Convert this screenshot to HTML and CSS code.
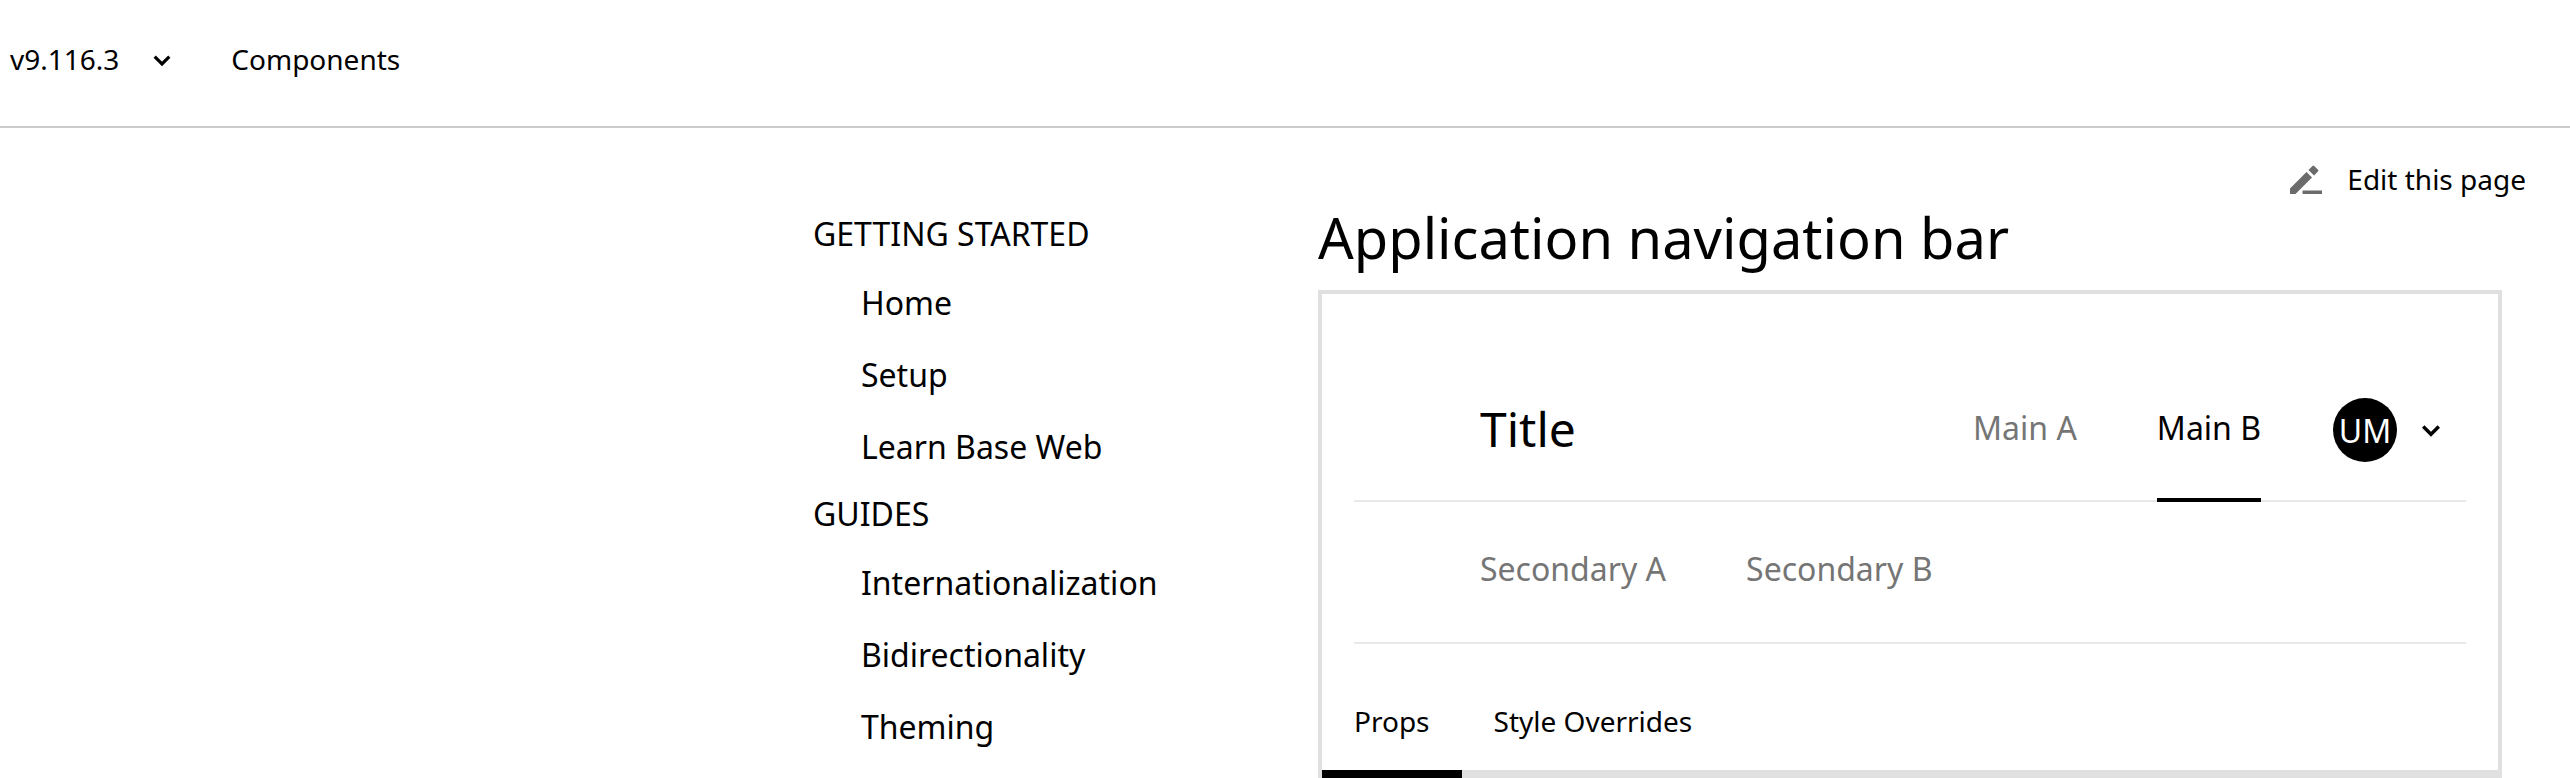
FILE: index.html
```html
<!DOCTYPE html>
<html lang="en">
<head>
<meta charset="utf-8">
<title>Application navigation bar</title>
<link rel="stylesheet" href="styles.css">
</head>
<body>
<header class="topbar">
  <span class="version">v9.116.3</span>
  <svg class="chev chev-top" viewBox="0 0 24 24"><path d="M6.5 9.5 12 15 17.5 9.5" /></svg>
  <span class="top-link">Components</span>
</header>
<div class="page">
  <nav class="sidebar">
    <div class="group">GETTING STARTED</div>
    <a class="item">Home</a>
    <a class="item">Setup</a>
    <a class="item">Learn Base Web</a>
    <div class="group">GUIDES</div>
    <a class="item">Internationalization</a>
    <a class="item">Bidirectionality</a>
    <a class="item">Theming</a>
  </nav>
  <main class="content">
    <div class="edit-row">
      <svg class="pencil" viewBox="0 0 32 30"><path d="M0 29V23.5L16.5 7 22 12.5 5.5 29Z M18.5 5 22.5 1a1.2 1.2 0 0 1 1.7 0l3.8 3.8a1.2 1.2 0 0 1 0 1.7L24 10.5Z M12.5 25.5H32V29H12.5Z" /></svg>
      <span class="edit-text">Edit this page</span>
    </div>
    <h1 class="title">Application navigation bar</h1>
    <section class="card">
      <div class="appnav">
        <div class="appnav-main">
          <span class="app-title">Title</span>
          <div class="main-links">
            <span class="main-link">Main A</span>
            <span class="main-link active">Main B</span>
          </div>
          <span class="avatar">UM</span>
          <svg class="chev chev-user" viewBox="0 0 24 24"><path d="M6.5 9.5 12 15 17.5 9.5" /></svg>
        </div>
        <div class="appnav-sub">
          <span class="sub-link">Secondary A</span>
          <span class="sub-link">Secondary B</span>
        </div>
      </div>
      <div class="tabs">
        <span class="tab">Props</span>
        <span class="tab">Style Overrides</span>
      </div>
      <div class="tab-track"><div class="tab-thumb"></div></div>
    </section>
  </main>
</div>
</body>
</html>
```
FILE: styles.css
```css
html, body { margin: 0; padding: 0; height: 778px; overflow: hidden; background: #fff; }
body { font-family: "Noto Sans", sans-serif; color: #000; }
.topbar { height: 118px; padding-bottom: 8px; border-bottom: 2px solid #cbcbcb; display: flex; align-items: center; padding-left: 10px; font-size: 28px; }
.chev { fill: none; stroke: #000; stroke-width: 2.4; }
.chev-top { width: 32px; height: 32px; margin-left: 27px; margin-top: 2px; }
.top-link { margin-left: 53px; }
.page { display: flex; }
.sidebar { width: 505px; margin-left: 813px; padding-top: 75px; display: flex; flex-direction: column; font-size: 32px; }
.group { height: 64px; line-height: 62px; }
.item { height: 72px; line-height: 72px; padding-left: 48px; }
.content { width: 1184px; }
.edit-row { display: flex; align-items: center; justify-content: flex-end; margin-right: -24px; height: 40px; margin-top: 31px; margin-bottom: 1px; font-size: 28px; }
.pencil { width: 32px; height: 30px; fill: #6b6b6b; margin-right: 25px; margin-top: 2px; }
.title { margin: 0 0 16px; font-size: 56px; font-weight: 400; line-height: 74px; }
.card { border: 4px solid #e0e0e0; border-bottom: 0; height: 484px; display: flex; flex-direction: column; }
.appnav { padding: 0 32px; }
.appnav-main { height: 140px; padding-top: 66px; border-bottom: 2px solid #e8e8e8; display: flex; align-items: center; padding-left: 126px; }
.app-title { font-size: 48px; margin-right: auto; padding-bottom: 3px; }
.main-links { display: flex; gap: 80px; align-self: flex-start; margin-right: 72px; }
.main-link { font-size: 32px; color: #757575; display: flex; align-items: center; box-sizing: border-box; height: 142px; padding-bottom: 3px; border-bottom: 4px solid transparent; }
.main-link.active { color: #000; border-bottom-color: #000; }
.avatar { width: 64px; height: 64px; border-radius: 50%; background: #000; color: #fff; font-size: 32px; display: flex; align-items: center; justify-content: center; }
.chev-user { width: 34px; height: 34px; margin-left: 17px; margin-right: 18px; }
.appnav-sub { height: 133px; padding-bottom: 7px; border-bottom: 2px solid #e8e8e8; display: flex; align-items: center; gap: 80px; padding-left: 126px; font-size: 32px; color: #757575; }
.tabs { height: 98px; padding-top: 28px; display: flex; gap: 64px; align-items: center; padding-left: 32px; font-size: 28px; }
.tab-track { height: 8px; background: #e0e0e0; }
.tab-thumb { width: 140px; height: 8px; background: #000; }
```
